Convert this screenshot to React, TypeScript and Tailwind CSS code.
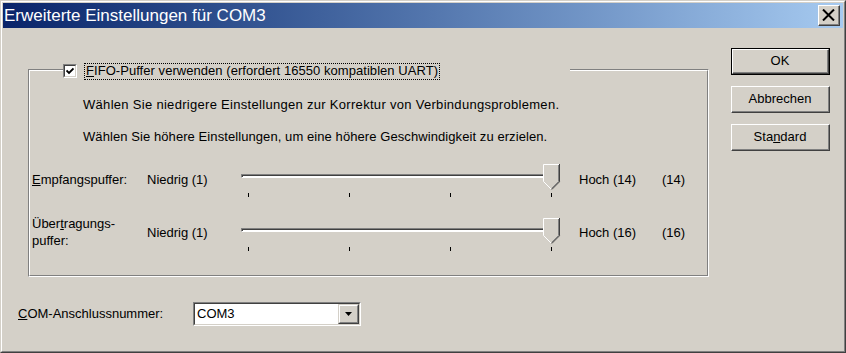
import React from "react";

function Btn({ children, def }: { children: React.ReactNode; def?: boolean }) {
  const inner = (
    <div className="h-full w-full border border-t-white border-l-white border-r-[#404040] border-b-[#404040]">
      <div className="h-full w-full border-r border-b border-r-[#808080] border-b-[#808080] flex items-center justify-center">
        {children}
      </div>
    </div>
  );
  if (def) {
    return <div className="w-[99px] h-[27px] border border-black">{inner}</div>;
  }
  return <div className="w-[99px] h-[27px]">{inner}</div>;
}

function Slider() {
  return (
    <div className="relative w-[322px] h-[34px]">
      <div className="pt-[10px]">
        <div className="w-[317px] border border-t-[#808080] border-l-[#808080] border-r-white border-b-white">
          <div className="h-[2px] border-t border-l border-t-[#404040] border-l-[#404040] bg-white"></div>
        </div>
      </div>
      <div className="flex pt-[15px] pl-[7px] gap-[100px]">
        <div className="w-[1px] h-[4px] bg-black"></div>
        <div className="w-[1px] h-[4px] bg-black"></div>
        <div className="w-[1px] h-[4px] bg-black"></div>
        <div className="w-[1px] h-[4px] bg-black"></div>
      </div>
      <svg className="absolute left-[302px] top-0" width="18" height="26" viewBox="0 0 18 26">
        <polygon points="0.5,0.5 16.5,0.5 16.5,17.5 8.5,25.5 0.5,17.5" fill="#d4d0c8" />
        <path d="M0.5 17.5 L0.5 0.5 L16 0.5" stroke="#ffffff" fill="none" />
        <path d="M0.5 17.5 L8 25" stroke="#ffffff" fill="none" />
        <path d="M15.5 1 L15.5 17.5 L8.5 24.5" stroke="#808080" fill="none" />
        <path d="M16.5 0 L16.5 17.8 L8.8 25.5" stroke="#404040" fill="none" />
      </svg>
    </div>
  );
}

export default function App() {
  return (
    <div
      className="w-[846px] h-[353px] bg-[#d4d0c8] border border-t-[#d4d0c8] border-l-[#d4d0c8] border-r-[#404040] border-b-[#404040] text-black text-[13px] leading-[16px]"
      style={{ fontFamily: '"Liberation Sans", Arial, sans-serif' }}
    >
      <div className="h-full border border-t-white border-l-white border-r-[#808080] border-b-[#808080] p-[1px] flex flex-col">
        {/* title bar */}
        <div className="h-[25px] flex items-center justify-between bg-linear-to-r from-[#0a246a] to-[#a6caf0]">
          <span className="pl-[1px] text-white text-[17px] leading-[20px]">Erweiterte Einstellungen für COM3</span>
          <div className="mr-[3px] w-[22px] h-[21px] bg-[#d4d0c8] border border-t-white border-l-white border-r-[#404040] border-b-[#404040]">
            <div className="h-full w-full border-r border-b border-r-[#808080] border-b-[#808080] flex items-center justify-center">
              <svg width="13" height="12" viewBox="0 0 13 12">
                <path d="M1 0.5 L12 11.5 M12 0.5 L1 11.5" stroke="#000" strokeWidth="2" />
              </svg>
            </div>
          </div>
        </div>

        <div className="flex">
          {/* left column */}
          <div className="pl-[15px]">
            <div className="ml-[10px] mt-[41px] w-[681px] h-[208px] relative border border-t-[#808080] border-l-[#808080] border-r-white border-b-white">
              <div className="h-full w-full border border-t-white border-l-white border-r-[#808080] border-b-[#808080] flex flex-col pt-[26px]">
                <div className="pl-[53px] tracking-[0.3px]">Wählen Sie niedrigere Einstellungen zur Korrektur von Verbindungsproblemen.</div>
                <div className="pl-[53px] mt-[16px] tracking-[0.08px]">Wählen Sie höhere Einstellungen, um eine höhere Geschwindigkeit zu erzielen.</div>

                <div className="flex mt-[19px] h-[34px] pl-[2px]">
                  <div className="w-[115px] mt-[8px]"><u>E</u>mpfangspuffer:</div>
                  <div className="w-[94px] mt-[8px]">Niedrig (1)</div>
                  <Slider />
                  <div className="w-[83px] ml-[16px] mt-[8px]">Hoch (14)</div>
                  <div className="mt-[8px]">(14)</div>
                </div>

                <div className="flex mt-[20px] h-[34px] pl-[2px]">
                  <div className="w-[115px] mt-[-3px] leading-[17px]">Über<u>t</u>ragungs-<br />puffer:</div>
                  <div className="w-[94px] mt-[7px]">Niedrig (1)</div>
                  <Slider />
                  <div className="w-[83px] ml-[16px] mt-[7px]">Hoch (16)</div>
                  <div className="mt-[7px]">(16)</div>
                </div>
              </div>

              {/* legend with checkbox */}
              <div className="absolute left-[34px] top-[-8px] w-[507px] h-[18px] bg-[#d4d0c8] flex items-center">
                <div className="w-[14px] h-[14px] border border-t-[#808080] border-l-[#808080] border-r-white border-b-white">
                  <div className="h-full w-full border border-t-[#404040] border-l-[#404040] border-r-[#d4d0c8] border-b-[#d4d0c8] bg-white flex items-center justify-center">
                    <svg width="8" height="8" viewBox="0 0 8 8">
                      <path d="M0.5 3.5 L3 6 L7.5 1.5" stroke="#000" strokeWidth="1.8" fill="none" />
                    </svg>
                  </div>
                </div>
                <div className="ml-[7px] h-[17px] px-[1px] border border-dotted border-black flex items-center">
                  <span className="tracking-[0.05px]"><u>F</u>IFO-Puffer verwenden (erfordert 16550 kompatiblen UART)</span>
                </div>
              </div>
            </div>

            {/* COM row */}
            <div className="flex items-center mt-[25px] h-[24px]">
              <div className="w-[175px]"><u>C</u>OM-Anschlussnummer:</div>
              <div className="w-[168px] h-[24px] border border-t-[#808080] border-l-[#808080] border-r-white border-b-white">
                <div className="h-full w-full border border-t-[#404040] border-l-[#404040] border-r-[#d4d0c8] border-b-[#d4d0c8] bg-white flex items-center justify-between">
                  <span className="pl-[2px]">COM3</span>
                  <div className="w-[21px] h-[20px] bg-[#d4d0c8] border border-t-[#d4d0c8] border-l-[#d4d0c8] border-r-[#404040] border-b-[#404040]">
                    <div className="h-full w-full border border-t-white border-l-white border-r-[#808080] border-b-[#808080] flex items-center justify-center">
                      <svg width="7" height="4" viewBox="0 0 7 4">
                        <polygon points="0,0 7,0 3.5,4" fill="#000" />
                      </svg>
                    </div>
                  </div>
                </div>
              </div>
            </div>
          </div>

          {/* buttons */}
          <div className="ml-[22px] mt-[20px] flex flex-col gap-[11px]">
            <Btn def>OK</Btn>
            <Btn>Abbrechen</Btn>
            <Btn>Sta<u>n</u>dard</Btn>
          </div>
        </div>
      </div>
    </div>
  );
}
